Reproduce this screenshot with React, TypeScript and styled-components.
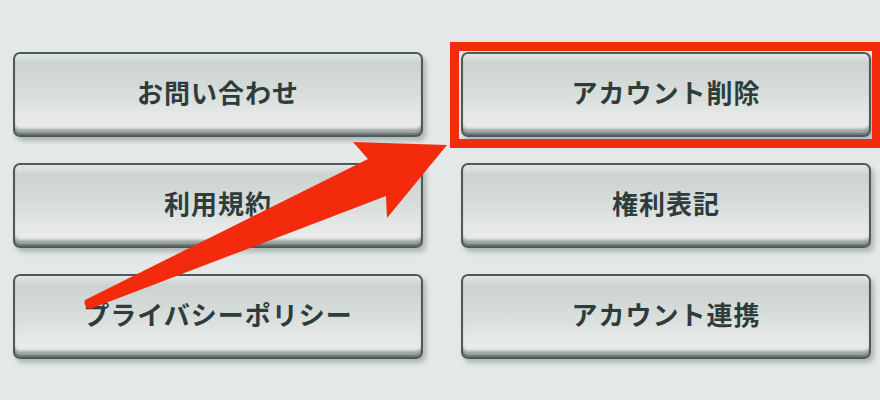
import React from 'react';
import styled, { createGlobalStyle } from 'styled-components';

const GlobalStyle = createGlobalStyle`
  html, body {
    margin: 0;
    padding: 0;
    background: #e4e8e9;
  }
`;

const Page = styled.div`
  position: relative;
  width: 880px;
  height: 400px;
  overflow: hidden;
  background: #e4e8e9;
  font-family: 'Noto Sans CJK JP', 'Noto Sans', sans-serif;
`;

const Grid = styled.div`
  display: grid;
  grid-template-columns: 410px 410px;
  column-gap: 38px;
  row-gap: 26px;
  padding: 52px 0 0 13px;
`;

const Cell = styled.div<{ $highlight?: boolean }>`
  position: relative;
  display: flex;

  &::after {
    content: '';
    display: ${(p) => (p.$highlight ? 'block' : 'none')};
    position: absolute;
    left: -11px;
    top: -10px;
    right: -10px;
    bottom: -11px;
    border: 9px solid #f42a0c;
    pointer-events: none;
  }
`;

const MenuButton = styled.button`
  flex: 1;
  height: 85px;
  box-sizing: border-box;
  border: 2px solid #4b5b59;
  border-radius: 7px;
  padding: 0 0 6px;
  background: linear-gradient(
    180deg,
    #e3e7e6 0%,
    #ccd3d1 12%,
    #d6dcda 45%,
    #e7eae9 80%,
    #e9ecea 100%
  );
  box-shadow:
    inset 0 -2px 0 #6f7977,
    inset 0 -7px 3px -1px #97a09e,
    3px 4px 5px rgba(40, 50, 50, 0.28);
  color: #2e3c3b;
  font-family: 'Noto Sans CJK JP', 'Noto Sans', sans-serif;
  font-size: 26px;
  font-weight: 700;
  letter-spacing: 1px;
  display: flex;
  align-items: center;
  justify-content: center;
  cursor: pointer;
`;

const ArrowLayer = styled.svg`
  position: absolute;
  left: 0;
  top: 0;
  pointer-events: none;
`;

const items = [
  { label: 'お問い合わせ' },
  { label: 'アカウント削除', highlight: true },
  { label: '利用規約' },
  { label: '権利表記' },
  { label: 'プライバシーポリシー' },
  { label: 'アカウント連携' },
];

const Arrow = () => (
  <ArrowLayer width="880" height="400" viewBox="0 0 880 400">
    <path
      d="M447 145 L353 142 L368 159 L85 300 Q83 307 90 309 L386 196 L387 218 Z"
      fill="#f42a0c"
    />
  </ArrowLayer>
);

export default function App() {
  return (
    <Page>
      <GlobalStyle />
      <Grid>
        {items.map((item) => (
          <Cell key={item.label} $highlight={item.highlight}>
            <MenuButton>{item.label}</MenuButton>
          </Cell>
        ))}
      </Grid>
      <Arrow />
    </Page>
  );
}
